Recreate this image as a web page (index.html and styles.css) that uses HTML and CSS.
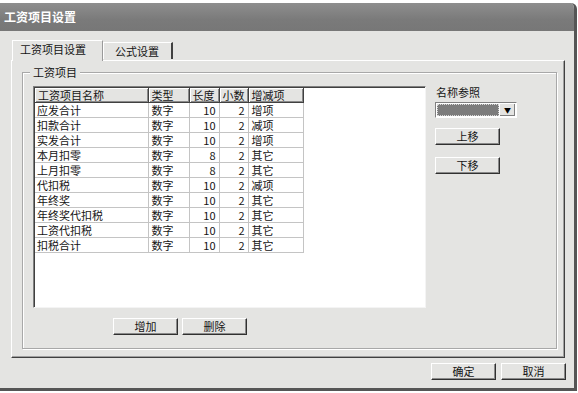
FILE: index.html
```html
<!DOCTYPE html>
<html lang="zh-CN">
<head>
    <meta charset="UTF-8">
    <title>工资项目设置</title>
    <link rel="stylesheet" href="styles.css">
</head>
<body>
    <div class="window">
        <div class="titlebar">工资项目设置</div>
        <div class="client">
            <div class="tabs">
                <div class="tab active">工资项目设置</div>
                <div class="tab">公式设置</div>
            </div>
            <div class="tabpanel">
                <fieldset class="group">
                    <legend>工资项目</legend>
                    <div class="group-body">
                        <div class="list-col">
                            <div class="listview">
                                <table class="grid">
                                    <colgroup>
                                        <col class="c-name">
                                        <col class="c-type">
                                        <col class="c-len">
                                        <col class="c-dec">
                                        <col class="c-inc">
                                    </colgroup>
                                    <thead>
                                        <tr>
                                            <th>工资项目名称</th>
                                            <th>类型</th>
                                            <th>长度</th>
                                            <th>小数</th>
                                            <th>增减项</th>
                                        </tr>
                                    </thead>
                                    <tbody>
                                        <tr><td>应发合计</td><td>数字</td><td class="num">10</td><td class="num">2</td><td>增项</td></tr>
                                        <tr><td>扣款合计</td><td>数字</td><td class="num">10</td><td class="num">2</td><td>减项</td></tr>
                                        <tr><td>实发合计</td><td>数字</td><td class="num">10</td><td class="num">2</td><td>增项</td></tr>
                                        <tr><td>本月扣零</td><td>数字</td><td class="num">8</td><td class="num">2</td><td>其它</td></tr>
                                        <tr><td>上月扣零</td><td>数字</td><td class="num">8</td><td class="num">2</td><td>其它</td></tr>
                                        <tr><td>代扣税</td><td>数字</td><td class="num">10</td><td class="num">2</td><td>减项</td></tr>
                                        <tr><td>年终奖</td><td>数字</td><td class="num">10</td><td class="num">2</td><td>其它</td></tr>
                                        <tr><td>年终奖代扣税</td><td>数字</td><td class="num">10</td><td class="num">2</td><td>其它</td></tr>
                                        <tr><td>工资代扣税</td><td>数字</td><td class="num">10</td><td class="num">2</td><td>其它</td></tr>
                                        <tr><td>扣税合计</td><td>数字</td><td class="num">10</td><td class="num">2</td><td>其它</td></tr>
                                    </tbody>
                                </table>
                            </div>
                            <div class="list-buttons">
                                <button class="btn">增加</button>
                                <button class="btn">删除</button>
                            </div>
                        </div>
                        <div class="side">
                            <div class="side-label">名称参照</div>
                            <div class="combo">
                                <span class="combo-field"></span>
                                <span class="combo-btn">▼</span>
                            </div>
                            <button class="btn">上移</button>
                            <button class="btn">下移</button>
                        </div>
                    </div>
                </fieldset>
            </div>
            <div class="footer">
                <button class="btn">确定</button>
                <button class="btn">取消</button>
            </div>
        </div>
    </div>
</body>
</html>
```

FILE: styles.css
```css
body {
    margin: 0;
    background-color: #ffffff;
    font-family: "Noto Sans CJK SC", "DejaVu Sans", sans-serif;
    font-size: 11px;
    color: #141414;
}

.window {
    margin-top: 3px;
    width: 577px;
    height: 388px;
    box-sizing: border-box;
    background-color: #e4e4e2;
    border-right: 3px solid #555555;
    border-bottom: 3px solid #555555;
    border-top-right-radius: 6px;
    overflow: hidden;
}

.titlebar {
    height: 28px;
    line-height: 28px;
    padding-left: 4px;
    background: linear-gradient(#8e8e8e, #7a7a7a 60%, #777777);
    color: #ffffff;
    font-weight: bold;
    font-size: 12px;
}

.client {
    padding-top: 9px;
}

/* 选项卡 */
.tabs {
    display: flex;
    align-items: flex-end;
    margin-left: 12px;
    height: 20px;
}

.tab {
    height: 17px;
    line-height: 16px;
    padding: 0 12px 0 11px;
    border-top: 1px solid #ffffff;
    border-left: 1px solid #ffffff;
    border-right: 2px solid #404040;
    box-sizing: border-box;
    margin-bottom: 1px;
}

.tab.active {
    height: 21px;
    line-height: 17px;
    width: 91px;
    padding: 0 0 0 7px;
    margin-bottom: -1px;
    border-right: 1px solid #9a9a9a;
    background-color: #e4e4e2;
    position: relative;
    z-index: 1;
}

.tabpanel {
    margin-left: 11px;
    width: 554px;
    height: 298px;
    box-sizing: border-box;
    border-top: 1px solid #ffffff;
    border-left: 1px solid #ffffff;
    border-right: 1px solid #404040;
    border-bottom: 1px solid #404040;
    box-shadow: inset -1px -1px 0 #a0a0a0;
    padding-top: 4px;
}

/* 分组框 */
.group {
    margin: 0 0 0 10px;
    width: 535px;
    height: 284px;
    box-sizing: border-box;
    padding: 7px 0 0 10px;
    border: 1px solid #a8a8a8;
    box-shadow: 1px 1px 0 #ffffff, inset 1px 1px 0 #ffffff;
}

.group legend {
    padding: 0 3px;
    margin-left: -3px;
    line-height: 14px;
    background-color: #e4e4e2;
}

.group-body {
    display: flex;
    align-items: flex-start;
}

.list-col {
    width: 393px;
}

.listview {
    height: 222px;
    box-sizing: border-box;
    background-color: #ffffff;
    border: 1px solid;
    border-color: #808080 #f4f4f4 #f4f4f4 #808080;
    box-shadow: inset 1px 1px 0 #404040;
    padding: 1px 0 0 1px;
}

.grid {
    border-collapse: collapse;
    table-layout: fixed;
    width: 268px;
}

.c-name { width: 113px; }
.c-type { width: 41px; }
.c-len { width: 30px; }
.c-dec { width: 29px; }
.c-inc { width: 55px; }

.grid th {
    height: 14px;
    padding: 0 3px;
    font-weight: normal;
    text-align: left;
    line-height: 13px;
    background-color: #e4e4e2;
    border-right: 1px solid #404040;
    border-bottom: 1px solid #404040;
    box-shadow: inset 1px 1px 0 #ffffff, inset -1px -1px 0 #8a8a8a;
    white-space: nowrap;
    overflow: hidden;
}

.grid td {
    height: 14px;
    padding: 0 3px;
    line-height: 14px;
    border-right: 1px solid #c4c4c4;
    border-bottom: 1px solid #c4c4c4;
    white-space: nowrap;
    overflow: hidden;
}

.grid td:first-child {
    padding-left: 2px;
}

.grid td.num {
    text-align: right;
    padding-right: 3px;
}

.list-buttons {
    display: flex;
    gap: 4px;
    margin: 10px 0 0 80px;
}

/* 按钮 */
.btn {
    width: 65px;
    height: 17px;
    padding: 0;
    font-family: inherit;
    font-size: 11px;
    line-height: 13px;
    color: #141414;
    background-color: #e4e4e2;
    border: 1px solid;
    border-color: #ffffff #303030 #303030 #ffffff;
    box-shadow: inset -1px -1px 0 #8a8a8a;
    border-radius: 0;
}

.side {
    margin-left: 9px;
    display: flex;
    flex-direction: column;
    align-items: flex-start;
}

.side-label {
    margin: 0 0 3px 1px;
    line-height: 13px;
}

.combo {
    display: flex;
    width: 82px;
    height: 16px;
    box-sizing: border-box;
    border: 1px solid;
    border-color: #808080 #ffffff #ffffff #808080;
    background-color: #ffffff;
    padding: 1px;
    margin-bottom: 10px;
}

.combo-field {
    flex: 1;
    background-color: #7c7c7c;
    outline: 1px dotted #d8d8d8;
    outline-offset: -1px;
}

.combo-btn {
    width: 15px;
    background-color: #e4e4e2;
    border-left: 1px solid #ffffff;
    box-shadow: inset -1px -1px 0 #808080;
    font-size: 7px;
    line-height: 12px;
    text-align: center;
    color: #000000;
}

.side .btn + .btn {
    margin-top: 12px;
}

.footer {
    display: flex;
    justify-content: flex-end;
    gap: 5px;
    margin-top: 5px;
    padding-right: 8px;
}
```
